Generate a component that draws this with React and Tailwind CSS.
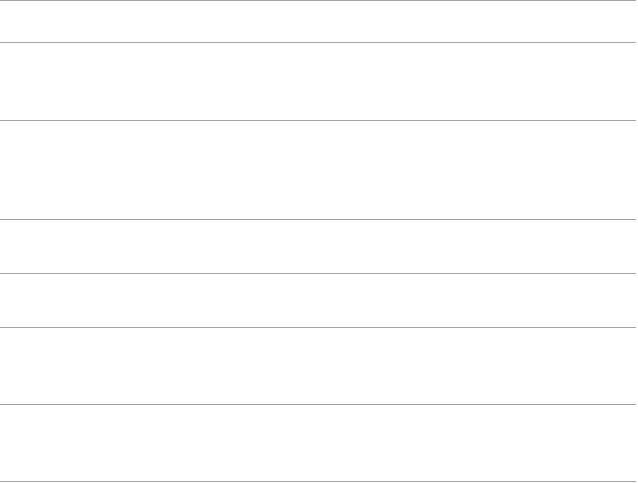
const rows = ['h-[42px]', 'h-[78px]', 'h-[99px]', 'h-[54px]', 'h-[54px]', 'h-[77px]', 'h-[77px]'];

export default function App() {
  return (
    <div className="w-[638px] h-[483px] bg-white" style={{ fontFamily: '"Liberation Sans", sans-serif' }}>
      <div className="w-[636px] border-b border-[#a3a3a3]">
        {rows.map((h, i) => (
          <div key={i} className={`${h} border-t border-[#a3a3a3]`} />
        ))}
      </div>
    </div>
  );
}
